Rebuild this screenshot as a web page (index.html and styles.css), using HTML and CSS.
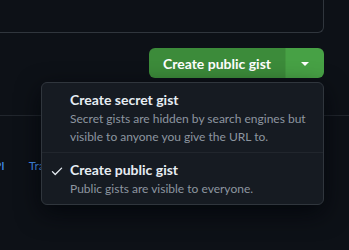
FILE: index.html
```html
<!DOCTYPE html>
<html>
<head>
  <title>New gist</title>
  <link rel="stylesheet" href="styles.css">
</head>
<body>

  <div class="editor-box"></div>

  <div class="actions">
    <div class="btn-group">
      <button class="btn-main" type="button">Create public gist</button>
      <button class="btn-caret" type="button" aria-label="Select gist type">
        <span class="caret"></span>
      </button>

      <div class="menu">
        <div class="menu-item">
          <span class="check"></span>
          <div>
            <div class="menu-title">Create secret gist</div>
            <div class="menu-desc">Secret gists are hidden by search engines but visible to anyone you give the URL to.</div>
          </div>
        </div>
        <div class="menu-item">
          <span class="check">
            <svg width="14" height="14" viewBox="0 0 16 16"><path fill="currentColor" d="M13.78 4.22a.75.75 0 0 1 0 1.06l-7.25 7.25a.75.75 0 0 1-1.06 0L2.22 9.28a.75.75 0 0 1 1.06-1.06L6 10.94l6.72-6.72a.75.75 0 0 1 1.06 0Z"/></svg>
          </span>
          <div>
            <div class="menu-title">Create public gist</div>
            <div class="menu-desc">Public gists are visible to everyone.</div>
          </div>
        </div>
      </div>
    </div>
  </div>

  <div class="footer">
    <a href="#">API</a>
    <a href="#">Training</a>
    <a href="#">Blog</a>
  </div>

</body>
</html>
```

FILE: styles.css
```css
body {
  background-color: #0d1117;
  color: #e6edf3;
  font-family: Lato, sans-serif;
  margin: 0;
  height: 250px;
  overflow: hidden;
}

.editor-box {
  width: 323px;
  height: 32px;
  border-right: 1px solid #30363d;
  border-bottom: 1px solid #30363d;
  border-bottom-right-radius: 6px;
}

.actions {
  display: flex;
  justify-content: flex-end;
  padding-right: 25px;
  margin-top: 15px;
}

.btn-group {
  display: flex;
  position: relative;
  height: 30px;
}

.btn-main,
.btn-caret {
  border: none;
  color: #fff;
  font-family: inherit;
  cursor: pointer;
}

.btn-main {
  width: 136px;
  background-color: #3c8b3a;
  border-radius: 6px 0 0 6px;
  font-size: 14px;
  font-weight: 700;
  padding: 0;
}

.btn-caret {
  width: 39px;
  background-color: #47a145;
  border-left: 1px solid #42963f;
  border-radius: 0 6px 6px 0;
  display: flex;
  align-items: center;
  justify-content: center;
}

.caret {
  border-top: 4px solid #fff;
  border-left: 4px solid transparent;
  border-right: 4px solid transparent;
  margin-top: 2px;
}

.menu {
  position: absolute;
  top: 34px;
  right: 0;
  width: 281px;
  background-color: #161b22;
  border: 1px solid #30363d;
  border-radius: 6px;
  box-shadow: 0 8px 24px rgba(1, 4, 9, 0.75);
  z-index: 2;
}

.menu-item {
  display: flex;
  gap: 4px;
  padding: 7px 10px 6px 8px;
}

.menu-item + .menu-item {
  border-top: 1px solid #21262d;
}

.check {
  width: 16px;
  flex-shrink: 0;
  padding-top: 2px;
  color: #e6edf3;
}

.menu-title {
  font-size: 14px;
  font-weight: 700;
  line-height: 20px;
}

.menu-desc {
  font-size: 12px;
  line-height: 18px;
  color: #8d96a0;
}

.footer {
  border-top: 1px solid #21262d;
  margin-top: 37px;
  padding-top: 42px;
  margin-left: -14px;
  display: flex;
  gap: 24px;
  font-size: 12px;
}

.footer a {
  color: #4493f8;
  text-decoration: none;
}
```
